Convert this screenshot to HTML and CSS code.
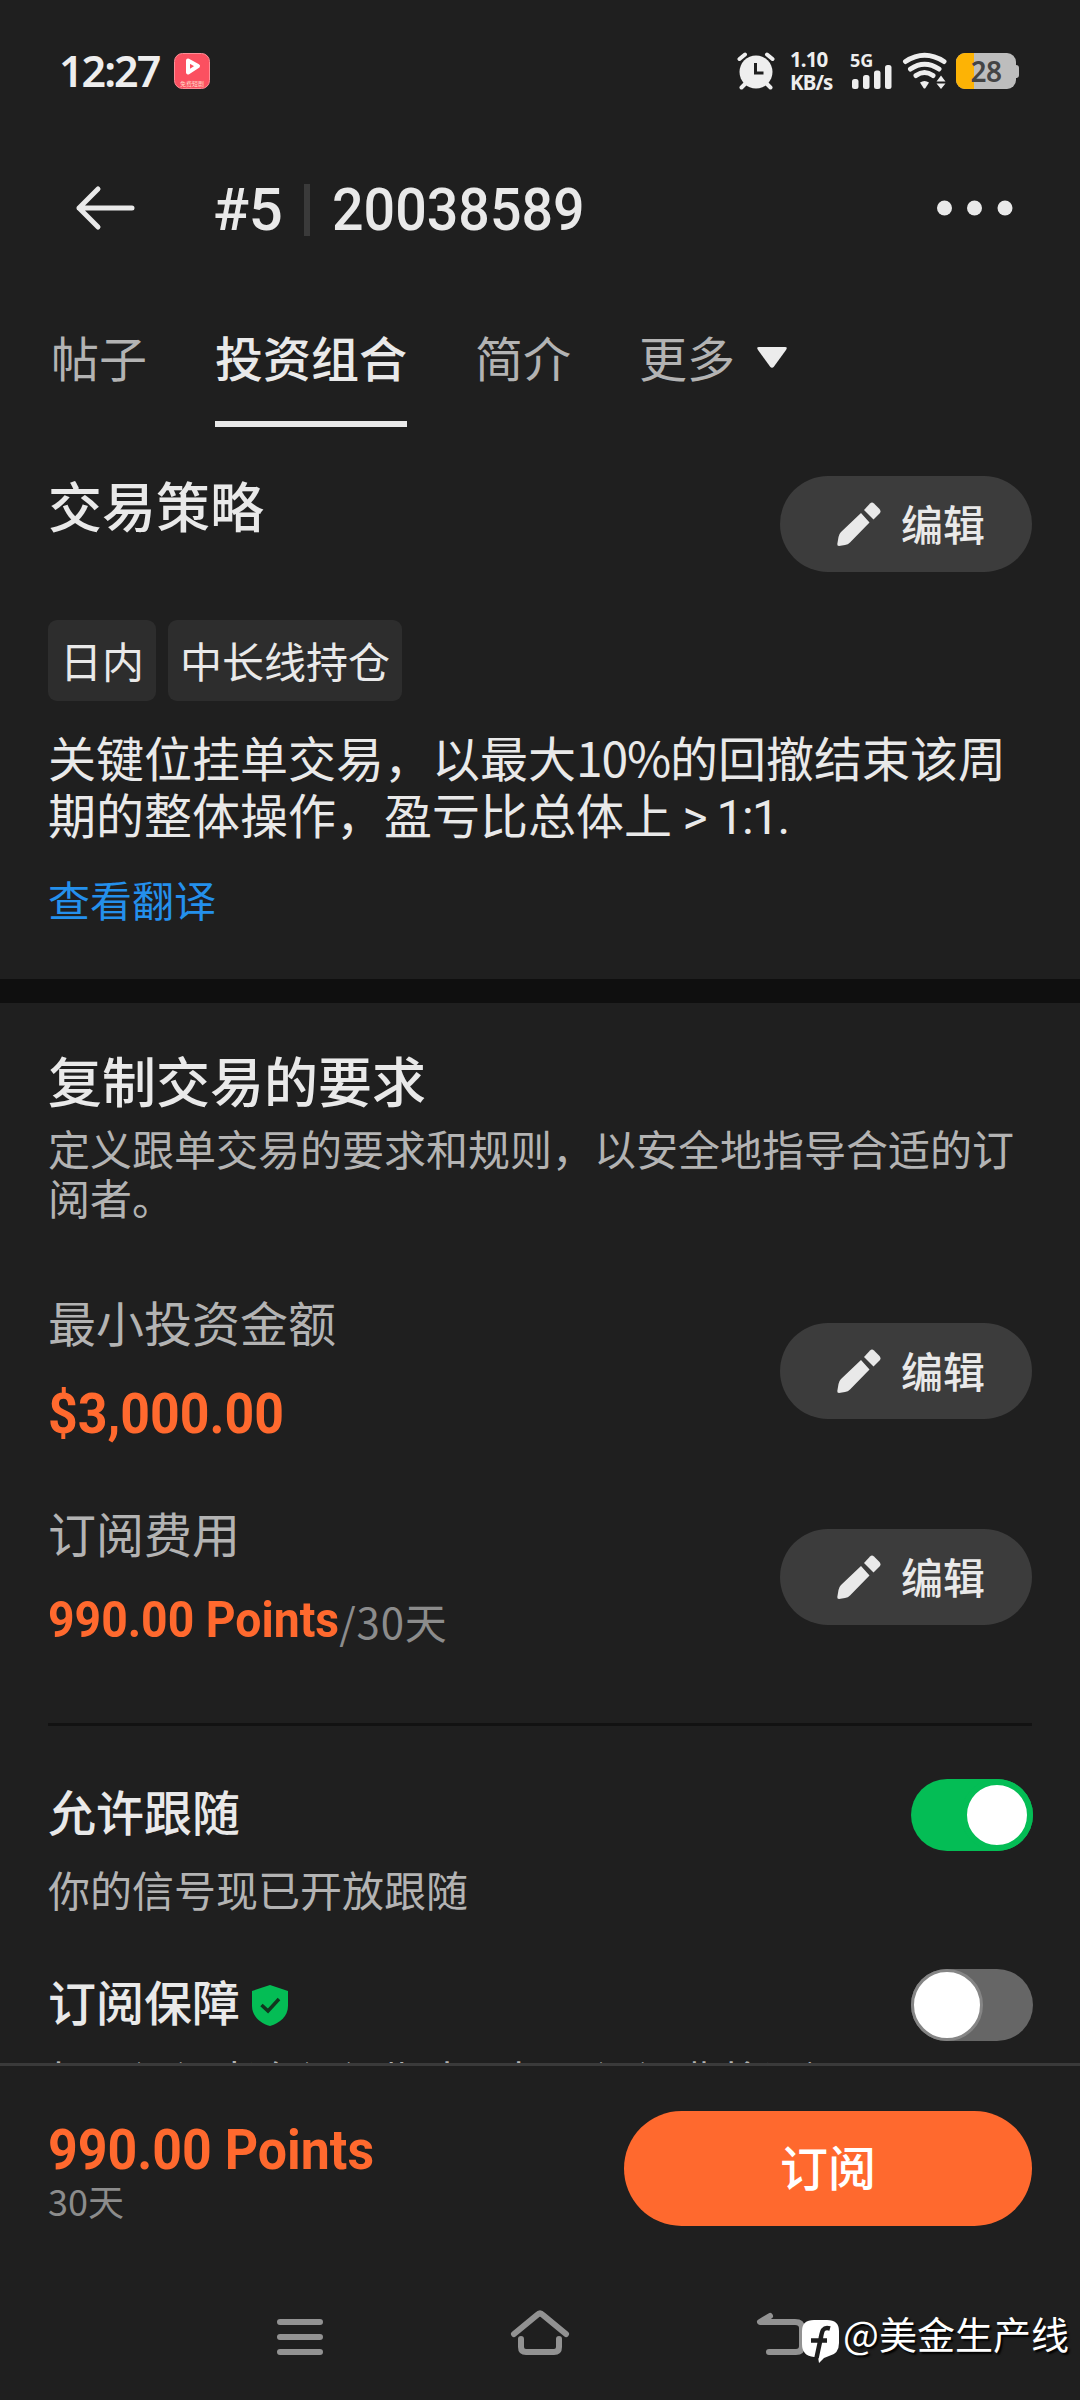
FILE: index.html
```html
<!DOCTYPE html>
<html lang="zh-CN">
<head>
<meta charset="utf-8">
<title>投资组合</title>
<link rel="stylesheet" href="styles.css">
</head>
<body>
<svg class="defs" width="0" height="0" aria-hidden="true">
  <symbol id="pencil" viewBox="0 0 44 44">
    <path d="M24 11 32.500 20.500 13 40.500Q11 42.500 8 43L2 44Q0 44 .3 42L1.500 35Q2 32 4 30Z"/>
    <path d="M27 8 33 1.500Q35 -.5 37 1.500L42.500 7Q44.500 9.500 42.500 11.500L36.500 17.500Z"/>
  </symbol>
</svg>
<div class="screen">
  <header class="status">
    <span class="clock">12:27</span>
    <svg class="app" width="36" height="36" viewBox="0 0 36 36">
      <rect x=".5" y=".5" width="35" height="35" rx="8" fill="#fb5060" stroke="#ff8d96"/>
      <path d="M14 7.500 24 13 14 19.500Z" fill="none" stroke="#fff" stroke-width="4" stroke-linejoin="round"/>
      <text x="6" y="32.500" font-size="6" textLength="24" fill="#ffd9c9">免费短剧</text>
    </svg>
    <svg class="alarm" width="38" height="38" viewBox="0 0 38 38">
      <circle cx="19" cy="20" r="16.500" fill="#eee"/>
      <path d="M2.500 7 8 2.500M30 2.500 35.500 7M4.500 35.500 9 31M33.500 35.500 29 31" stroke="#eee" stroke-width="4" stroke-linecap="round"/>
      <path d="M18.500 11v10h8" fill="none" stroke="#1f1f1f" stroke-width="3"/>
    </svg>
    <span class="speed"><span>1.10</span><span>KB/s</span></span>
    <span class="cell">
      <span>5G</span>
      <svg width="40" height="24" viewBox="0 0 40 24" fill="#eee"><rect y="14" width="6.500" height="10" rx="2.500"/><rect x="11" y="10" width="6.500" height="14" rx="2.500"/><rect x="22" y="5.500" width="6.500" height="18.500" rx="2.500"/><rect x="33" width="6.500" height="24" rx="2.500"/></svg>
    </span>
    <svg class="wifi" width="44" height="38" viewBox="0 0 44 38">
      <g fill="none" stroke="#eee" stroke-width="5" stroke-linecap="round"><path d="M2.500 9.500Q21.500-3 41 9.500M7.500 17Q21.500 7.500 36 17M13 23.500Q21.500 17.500 30 23.500"/></g>
      <path d="M17 30.500Q21.500 27.500 26 30.500L22.500 36Q21.500 37 20.500 36Z" fill="#eee"/>
      <path d="M33.500 29.500 38 23.500 42.500 29.500ZM33.500 31.500 38 37 42.500 31.500Z" fill="#eee"/>
    </svg>
    <span class="battery"><span class="level"></span><b>28</b></span>
  </header>

  <nav class="titlebar">
    <svg width="60" height="44" viewBox="0 0 60 44"><path d="M22 3 3 22 22 41M3 22H56" fill="none" stroke="#e9e9e9" stroke-width="5" stroke-linecap="round" stroke-linejoin="round"/></svg>
    <h1><span class="rank">#5</span><i></i><span class="narrow">20038589</span></h1>
    <svg class="dots" width="78" height="16" viewBox="0 0 78 16" fill="#e9e9e9"><circle cx="8.500" cy="8" r="7.500"/><circle cx="38.500" cy="8" r="7.500"/><circle cx="69" cy="8" r="7.500"/></svg>
  </nav>

  <nav class="tabs">
    <span>帖子</span><span class="active">投资组合</span><span>简介</span>
    <span class="more">更多 <svg width="30" height="21" viewBox="0 0 30 21"><path d="M2 0H28Q31 0 29 3L17 19.500Q15 22 13 19.500L1 3Q-1 0 2 0Z" fill="#ececec"/></svg></span>
  </nav>

  <main>
    <section class="strategy">
      <div class="row head"><h2>交易策略</h2><button class="edit"><svg width="44" height="44"><use href="#pencil"/></svg><span>编辑</span></button></div>
      <div class="chips"><span>日内</span><span>中长线持仓</span></div>
      <p class="about">关键位挂单交易，以最大<span class="percent">10%</span>的回撤结束该周期的整体操作，盈亏比总体上<span class="ratio"> &gt; 1:1.</span></p>
      <a class="translate">查看翻译</a>
    </section>

    <section class="rules">
      <h2>复制交易的要求</h2>
      <p class="hint">定义跟单交易的要求和规则，以安全地指导合适的订阅者。</p>
      <div class="row minimum">
        <div><div class="label">最小投资金额</div><div class="amount narrow">$3,000.00</div></div>
        <button class="edit"><svg width="44" height="44"><use href="#pencil"/></svg><span>编辑</span></button>
      </div>
      <div class="row fee">
        <div><div class="label">订阅费用</div><div class="price"><b class="narrow">990.00 Points</b><span>/30天</span></div></div>
        <button class="edit"><svg width="44" height="44"><use href="#pencil"/></svg><span>编辑</span></button>
      </div>
      <hr>
      <div class="row follow">
        <h3>允许跟随</h3><span class="toggle on"><i></i></span>
      </div>
      <p class="hint open">你的信号现已开放跟随</p>
      <div class="row guard">
        <h3>订阅保障<svg width="36" height="41" viewBox="0 0 36 41"><path d="M18 0 36 6V21C36 31 28 38 18 41 8 38 0 31 0 21V6Z" fill="#04bd55"/><path d="M9.500 20 16 26 27 14" fill="none" stroke="#12351f" stroke-width="3.500"/></svg></h3>
        <span class="toggle"><i></i></span>
      </div>
      <p class="hint cut">如果订阅者在订阅期内亏损，订阅费将退还</p>
    </section>
  </main>

  <footer class="buy">
    <div><div class="total narrow">990.00 Points</div><div class="term">30天</div></div>
    <button class="subscribe"><span>订阅</span></button>
  </footer>

  <nav class="system">
    <svg width="46" height="38" viewBox="0 0 46 38"><path d="M3 4H43M3 19H43M3 34H43" stroke="#929292" stroke-width="6" stroke-linecap="round"/></svg>
    <svg width="58" height="46" viewBox="0 0 58 46"><path d="M3 24 26 5Q29 2 32 5L55 24M10 29V37Q10 42 15 42H43Q48 42 48 37V29" fill="none" stroke="#929292" stroke-width="6" stroke-linecap="round"/></svg>
    <svg width="52" height="46" viewBox="0 0 52 46"><path d="M14 6 4 12H39Q46 12 46 18V36Q46 42 40 42H13" fill="none" stroke="#929292" stroke-width="6" stroke-linecap="round" stroke-linejoin="round"/></svg>
  </nav>
  <div class="watermark">
    <svg width="38" height="44" viewBox="0 0 38 44"><path d="M12 0H25Q37 0 37 11V23Q37 34 27 36L22 38 17 43 16 37H12Q0 36 0 24V11Q0 0 12 0Z" fill="#fff"/><path d="M28 8.500C21 6.500 20 11 19 17L14.500 38M9 20.500H25" fill="none" stroke="#1f1f1f" stroke-width="4.500"/></svg>
    <span>@美金生产线</span>
  </div>
</div>
</body>
</html>
```
FILE: styles.css
```css
* { box-sizing: border-box; }
body { margin: 0; background: #1f1f1f; color: #e9e9e9; font-family: Roboto, "Noto Sans CJK SC", sans-serif; }
h1, h2, h3, p { margin: 0; font-weight: 500; }
svg { display: block; flex: none; overflow: visible; fill: currentColor; }
button { border: 0; padding: 0; font: inherit; color: inherit; }
.defs { position: absolute; }
.screen { position: relative; width: 1080px; height: 2400px; overflow: hidden; display: flex; flex-direction: column; }
.narrow { transform: scaleX(.926); transform-origin: left; white-space: nowrap; }

.status { height: 142px; padding: 0 59px; display: flex; align-items: center; flex: none; font-family: "Noto Sans", sans-serif; color: #eee; }
.clock { width: 115px; font-size: 43px; font-weight: 600; letter-spacing: -2px; line-height: 50px; white-space: nowrap; flex: none; }
.app { font-family: "Noto Sans CJK SC", sans-serif; }
.alarm { margin-left: 527px; }
.speed { display: flex; flex-direction: column; margin-left: 15px; width: 60px; font-size: 20.5px; line-height: 23px; font-weight: 700; letter-spacing: -.9px; flex: none; }
.cell { display: flex; flex-direction: column; width: 53px; font-size: 18px; font-weight: 700; line-height: 13px; flex: none; }
.cell svg { margin: -2px 0 0 2px; }
.battery { position: relative; width: 60px; height: 36px; margin-left: 9px; border-radius: 9px; background: #bdbdbd; display: flex; align-items: center; justify-content: center; flex: none; }
.battery::after { content: ""; position: absolute; left: 60px; top: 12px; width: 3px; height: 13px; border-radius: 0 3px 3px 0; background: #bdbdbd; }
.level { position: absolute; left: 0; top: 0; width: 18px; height: 36px; border-radius: 9px 0 0 9px; background: #fdb305; }
.battery b { position: relative; font-size: 28px; font-weight: 600; letter-spacing: -.5px; color: #444; }

.titlebar { height: 132px; padding: 0 66px 0 76px; display: flex; align-items: center; flex: none; }
.titlebar h1 { display: flex; align-items: center; margin: 4px auto 0 77px; font-size: 60px; line-height: 70px; }
.rank { width: 91px; letter-spacing: -.5px; }
.titlebar i { width: 6px; height: 52px; margin-right: 22px; background: #3a3a3a; }

.tabs { height: 153px; padding: 51px 51px 0; display: flex; gap: 68px; flex: none; font-size: 48px; line-height: 72px; color: #b3b3b3; }
.tabs > span { height: 102px; white-space: nowrap; }
.tabs .active { color: #e9e9e9; font-weight: 500; border-bottom: 6px solid #e9e9e9; }
.tabs .more { display: flex; gap: 22px; }
.more svg { margin-top: 22px; }

main { height: 1636px; flex: none; overflow: hidden; }
h2 { font-size: 54px; line-height: 64px; }
h3 { font-size: 48px; line-height: 72px; display: flex; align-items: center; gap: 12px; }
.row { display: flex; justify-content: space-between; }
.edit { width: 252px; height: 96px; border-radius: 48px; background: #3c3c3c; display: flex; align-items: center; gap: 20px; padding-left: 57px; font-size: 42px; font-weight: 500; flex: none; }
.edit span { margin-bottom: 3px; }
.strategy { height: 576px; padding: 49px 48px 0; border-bottom: 24px solid #0f0f0f; }
.strategy h2 { margin-top: 2px; }
.chips { display: flex; gap: 12px; margin-top: 48px; }
.chips span { height: 81px; padding: 0 12px; border-radius: 9px; background: #2d2d2d; font-size: 42px; line-height: 87px; }
.about { margin-top: 31px; font-size: 48px; line-height: 57px; font-weight: 400; }
.percent { font-family: "Noto Sans CJK SC", sans-serif; line-height: 1; letter-spacing: -1.2px; }
.ratio { letter-spacing: -1.5px; }
.translate { display: block; margin-top: 29px; font-size: 42px; line-height: 56px; color: #2490ec; }

.rules { padding: 50px 48px 0; }
.hint { font-size: 42px; line-height: 49px; font-weight: 400; color: #b3b3b3; }
.rules h2 + .hint { margin-top: 10px; }
.minimum, .fee { align-items: flex-start; height: 152px; }
.minimum .edit, .fee .edit { margin-top: 28px; }
.minimum { margin-top: 70px; }
.minimum > div { margin-top: -5px; }
.fee { margin-top: 54px; }
.label { font-size: 48px; line-height: 72px; color: #b3b3b3; }
.amount, .total { font-size: 56px; font-weight: 700; color: #ff692e; }
.amount { margin-top: 19px; line-height: 66px; }
.price { display: flex; align-items: flex-end; margin-top: 14px; height: 66px; }
.price b { margin-right: -23px; font-size: 50px; line-height: 66px; color: #ff692e; }
.price span { font-family: "Noto Sans CJK SC", sans-serif; font-size: 42px; line-height: 64px; letter-spacing: .8px; color: #8c8c8c; }
hr { height: 3px; border: 0; margin: 70px 0 0; background: #121212; }
.follow { margin-top: 53px; align-items: center; }
.toggle { width: 122px; height: 72px; margin-right: -1px; border-radius: 36px; background: #666; flex: none; }
.toggle i { display: block; width: 72px; height: 72px; border-radius: 50%; border: 3px solid #858585; background: #fff; }
.toggle.on { background: #04bd55; padding-left: 50px; }
.toggle.on i { border: 6px solid #04bd55; }
.open { margin-top: 17px; }
.guard { margin-top: 52px; align-items: center; }
.cut { margin-top: 17px; white-space: nowrap; }

.buy { height: 214px; padding: 45px 48px 0; border-top: 3px solid #3a3a3a; display: flex; justify-content: space-between; flex: none; }
.total { margin-top: 14px; line-height: 50px; }
.term { margin-top: 6px; font-family: "Noto Sans CJK SC", sans-serif; font-size: 36px; line-height: 38px; color: #8c8c8c; }
.subscribe { width: 408px; height: 115px; padding-bottom: 7px; border-radius: 58px; background: #ff692e; color: #fff; font-size: 48px; font-weight: 500; }

.system { display: flex; justify-content: space-between; align-items: flex-end; padding: 0 272px 44px 277px; height: 123px; flex: none; }
.watermark { position: absolute; left: 802px; top: 2310px; display: flex; align-items: center; gap: 3px; font-family: "Noto Sans CJK SC", sans-serif; font-size: 38px; line-height: 48px; color: #fff; text-shadow: 2px 2px 2px #000; white-space: nowrap; }
.watermark svg { margin-top: 10px; }
.watermark span { margin-top: -8px; }
```
